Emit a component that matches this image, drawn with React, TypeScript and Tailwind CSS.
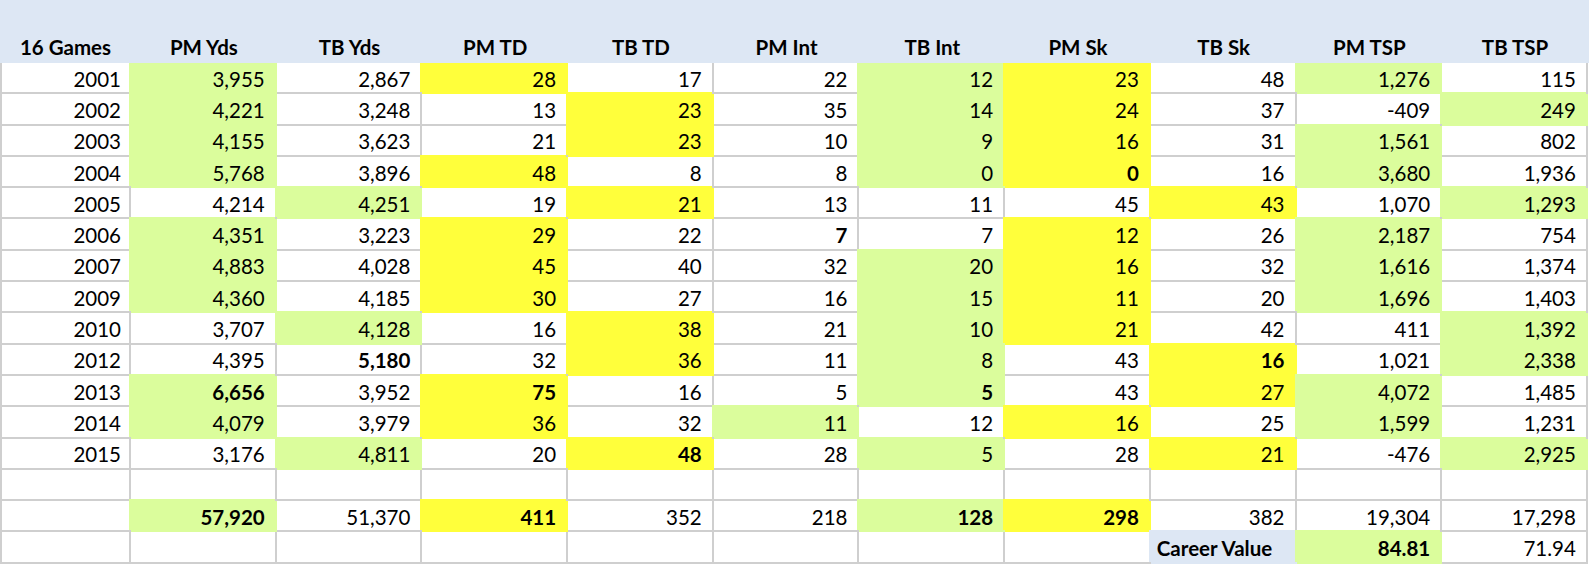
import React from "react"

const headers = ["16 Games", "PM Yds", "TB Yds", "PM TD", "TB TD", "PM Int", "TB Int", "PM Sk", "TB Sk", "PM TSP", "TB TSP"]

// flags before ":" -> g = green, y = yellow, h = header blue, b = bold, l = left aligned
const rows: string[][] = [
  ["2001", "g:3,955", "2,867", "y:28", "17", "22", "g:12", "y:23", "48", "g:1,276", "115"],
  ["2002", "g:4,221", "3,248", "13", "y:23", "35", "g:14", "y:24", "37", "-409", "g:249"],
  ["2003", "g:4,155", "3,623", "21", "y:23", "10", "g:9", "y:16", "31", "g:1,561", "802"],
  ["2004", "g:5,768", "3,896", "y:48", "8", "8", "g:0", "yb:0", "16", "g:3,680", "1,936"],
  ["2005", "4,214", "g:4,251", "19", "y:21", "13", "11", "45", "y:43", "1,070", "g:1,293"],
  ["2006", "g:4,351", "3,223", "y:29", "22", "b:7", "7", "y:12", "26", "g:2,187", "754"],
  ["2007", "g:4,883", "4,028", "y:45", "40", "32", "g:20", "y:16", "32", "g:1,616", "1,374"],
  ["2009", "g:4,360", "4,185", "y:30", "27", "16", "g:15", "y:11", "20", "g:1,696", "1,403"],
  ["2010", "3,707", "g:4,128", "16", "y:38", "21", "g:10", "y:21", "42", "411", "g:1,392"],
  ["2012", "4,395", "b:5,180", "32", "y:36", "11", "g:8", "43", "yb:16", "1,021", "g:2,338"],
  ["2013", "gb:6,656", "3,952", "yb:75", "16", "5", "gb:5", "43", "y:27", "g:4,072", "1,485"],
  ["2014", "g:4,079", "3,979", "y:36", "32", "g:11", "12", "y:16", "25", "g:1,599", "1,231"],
  ["2015", "3,176", "g:4,811", "20", "yb:48", "28", "g:5", "28", "y:21", "-476", "g:2,925"],
  ["", "", "", "", "", "", "", "", "", "", ""],
  ["", "gb:57,920", "51,370", "yb:411", "352", "218", "gb:128", "yb:298", "382", "19,304", "17,298"],
  ["", "", "", "", "", "", "", "", "hbl:Career Value", "gb:84.81", "71.94"],
]

function Cell({ raw, first }: { raw: string; first: boolean }) {
  const [flags, value] = raw.includes(":") ? raw.split(":") : ["", raw]
  let fill = "bg-white border-[#cfcfcf]"
  if (flags.includes("g")) fill = "bg-[#dbfd9c] border-[#dbfd9c] shadow-[-2px_-2px_0_0_#dbfd9c]"
  if (flags.includes("y")) fill = "bg-[#ffff3b] border-[#ffff3b] shadow-[-2px_-2px_0_0_#ffff3b]"
  if (flags.includes("h")) fill = "bg-[#dde7f4] border-[#dde7f4] shadow-[-2px_-2px_0_0_#dde7f4]"
  return (
    <div
      className={`flex items-center border-r-2 border-b-2 pt-[2px] ${fill} ${
        flags.includes("l") ? "justify-start pl-[6px]" : first ? "justify-end pr-[8px]" : "justify-end pr-[10px]"
      } ${flags.includes("b") ? "font-bold" : ""}`}
    >
      {value}
    </div>
  )
}

export default function App() {
  return (
    <div className="w-[1589px] h-[564px] bg-white text-black text-[20.5px] leading-6 overflow-hidden font-['Lato',sans-serif]">
      <div className="relative grid grid-cols-[131px_repeat(10,145.7px)] h-[63px] bg-[#dde7f4]">
        {headers.map((h) => (
          <div key={h} className="flex items-end justify-center pb-[4px] font-bold">
            {h}
          </div>
        ))}
      </div>
      <div className="grid grid-cols-[129px_repeat(10,145.7px)] auto-rows-[31.3px] w-max border-l-2 border-[#cfcfcf]">
        {rows.map((row, i) =>
          row.map((c, j) => <Cell key={`${i}-${j}`} raw={c} first={j === 0} />)
        )}
      </div>
    </div>
  )
}
